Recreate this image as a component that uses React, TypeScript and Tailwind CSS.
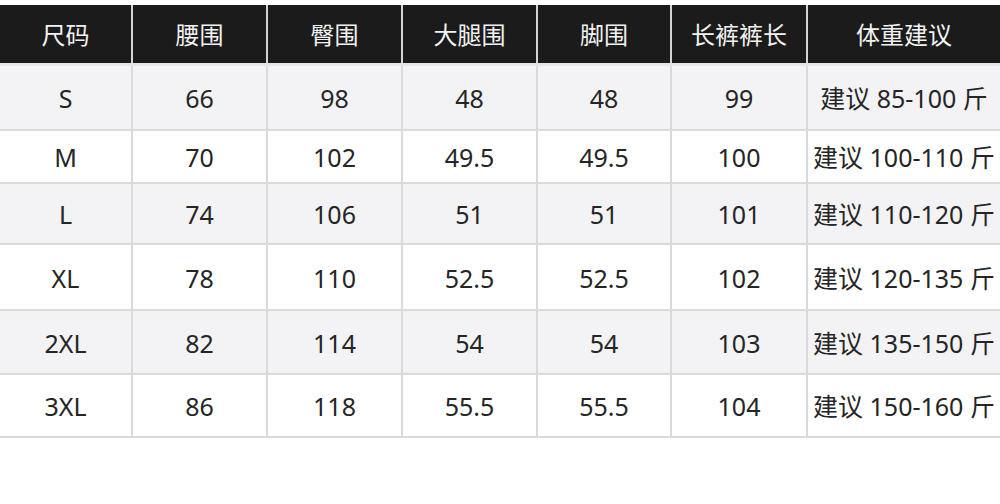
import React from "react";

const headers = ["尺码", "腰围", "臀围", "大腿围", "脚围", "长裤裤长", "体重建议"];

const rows: { cells: string[]; h: string; bg: string }[] = [
  { cells: ["S", "66", "98", "48", "48", "99", "建议 85-100 斤"], h: "h-[65px]", bg: "bg-[#f3f3f5]" },
  { cells: ["M", "70", "102", "49.5", "49.5", "100", "建议 100-110 斤"], h: "h-[53px]", bg: "bg-white" },
  { cells: ["L", "74", "106", "51", "51", "101", "建议 110-120 斤"], h: "h-[61px]", bg: "bg-[#f3f3f5]" },
  { cells: ["XL", "78", "110", "52.5", "52.5", "102", "建议 120-135 斤"], h: "h-[66px]", bg: "bg-white" },
  { cells: ["2XL", "82", "114", "54", "54", "103", "建议 135-150 斤"], h: "h-[64px]", bg: "bg-[#f3f3f5]" },
  { cells: ["3XL", "86", "118", "55.5", "55.5", "104", "建议 150-160 斤"], h: "h-[63px]", bg: "bg-white" },
];

const widths = ["w-[133px]", "w-[135px]", "w-[135px]", "w-[135px]", "w-[134px]", "w-[136px]", "flex-1"];

const App: React.FC = () => {
  return (
    <div
      className="w-[1000px] h-[504px] bg-white pt-[5px] overflow-hidden"
      style={{ fontFamily: '"Noto Sans", "Noto Sans CJK SC", sans-serif' }}
    >
      {/* header */}
      <div className="flex h-[61px] border-b-[3px] border-[#e6e6e6]">
        {headers.map((h, i) => (
          <div
            key={h}
            className={`${widths[i]} flex items-center justify-center bg-[#1b1b1b] text-[24px] text-[#f2f2f2] pt-[2px] ${
              i < headers.length - 1 ? "border-r-2 border-[#d4d4d4]" : ""
            }`}
          >
            {h}
          </div>
        ))}
      </div>

      {/* body */}
      {rows.map((r) => (
        <div key={r.cells[0]} className={`flex ${r.h} ${r.bg} border-b-2 border-[#dadada]`}>
          {r.cells.map((c, i) => (
            <div
              key={i}
              className={`${widths[i]} flex items-center justify-center text-[25px] text-[#252525] pt-[3px] whitespace-nowrap ${
                i < r.cells.length - 1 ? "border-r-2 border-[#dadada]" : ""
              }`}
            >
              {c}
            </div>
          ))}
        </div>
      ))}
    </div>
  );
};

export default App;
